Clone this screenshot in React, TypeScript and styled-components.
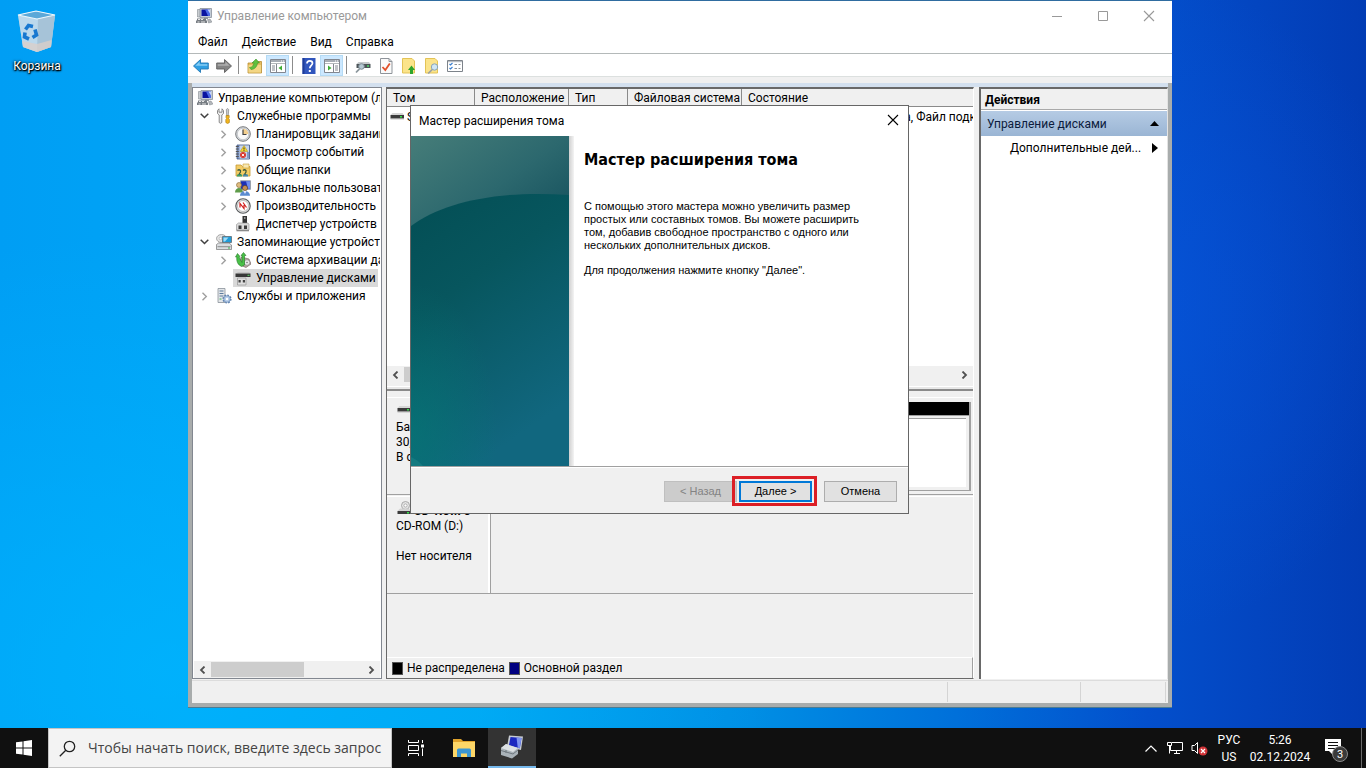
import React from "react";
import styled, { createGlobalStyle, css } from "styled-components";

const UI = `Roboto, "Open Sans", "Noto Sans", sans-serif`;
const CLASSIC = `"Liberation Sans", Arial, sans-serif`;

const Global = createGlobalStyle`
  *, *::before, *::after { box-sizing: border-box; }
  body { margin: 0; font-family: ${UI}; font-size: 12px; line-height: 16px; color: #000; }
  button, input { font: inherit; color: inherit; margin: 0; }
  button { padding: 0; border: 0; background: none; }
  svg { display: block; flex: none; }
  h1, h2, p, ul { margin: 0; padding: 0; }
`;

/* ---------- Desktop ---------- */

const Desktop = styled.div`
  min-height: 100vh;
  display: flex;
  flex-direction: column;
`;

const Workspace = styled.main`
  position: relative;
  flex: 1;
  min-height: 708px;
  overflow: hidden;
  background:
    radial-gradient(ellipse 45% 60% at 12% 92%, rgba(0, 184, 255, 0.65), rgba(0, 184, 255, 0)),
    radial-gradient(ellipse 20% 45% at 84% 42%, rgba(8, 88, 226, 0.5), rgba(8, 88, 226, 0)),
    linear-gradient(90deg, #009ef4 0%, #00a4f6 14%, #00a4f0 35%, #008ee4 55%, #0070da 70%, #034fcc 84%, #0345c0 92%, #023cb4 100%);
`;

const Shortcut = styled.button`
  position: absolute;
  left: 0;
  top: 8px;
  width: 74px;
  display: flex;
  flex-direction: column;
  align-items: center;
  gap: 4px;
  color: #fff;
  text-shadow: 0 1px 2px #000, 0 0 3px #000, 1px 1px 1px #000;
`;

/* ---------- Console window ---------- */

const Window = styled.section`
  position: absolute;
  inset: 0 194px 20px 188px;
  display: flex;
  flex-direction: column;
  border: 1px solid #4b7c94;
  border-top-color: #2f6ca0;
  border-left: 0;
  border-right: 0;
  background: #fff;
`;

const TitleBar = styled.header`
  height: 30px;
  display: flex;
  align-items: center;
  padding-left: 8px;
  color: #999;
`;

const Caption = styled.h1`
  flex: 1;
  padding-left: 5px;
  font-size: 12px;
  font-weight: 400;
`;

const CaptionButton = styled.button`
  width: 46px;
  height: 30px;
  display: grid;
  place-items: center;
`;

const MenuBar = styled.nav`
  height: 23px;
  display: flex;
  align-items: center;
  gap: 14px;
  padding-left: 10px;
  border-bottom: 1px solid #b4b9b9;
`;

const MenuItem = styled.button``;

const ToolBar = styled.div`
  height: 23px;
  display: flex;
  align-items: flex-end;
  padding-left: 1px;
  border-bottom: 1px solid #dce0df;
`;

const ToolButton = styled.button<{ $on?: boolean }>`
  width: 23px;
  height: 21px;
  display: grid;
  place-items: center;
  ${(p) => p.$on && css`background: #cce8ff; border: 1px solid #b5dbf5;`}
`;

const ToolDivider = styled.span`
  width: 1px;
  height: 18px;
  margin: 0 4px 2px 3px;
  background: #8c8c8c;
`;

const Frame = styled.div`
  flex: 1;
  min-height: 0;
  display: flex;
  flex-direction: column;
  border: 4px solid #a8acac;
  border-top: 0;
  background: #f0f0f0;
`;

const FrameHead = styled.div`
  height: 6px;
  margin: 0 -4px;
  background: #f0f0f0;
`;

const Panes = styled.div`
  flex: 1;
  min-height: 0;
  display: grid;
  grid-template-columns: 190px minmax(0, 1fr) 189px;
  column-gap: 4px;
  padding-top: 4px;
  background: linear-gradient(#d3e0ef 4px, #f0f0f0 4px);
`;

const Pane = styled.div`
  min-width: 0;
  min-height: 0;
  display: flex;
  flex-direction: column;
  overflow: hidden;
`;

const TreePane = styled(Pane)`
  border: 1px solid #828790;
  background: #fff;
  padding: 1px 1px 0;
`;

const Tree = styled.ul`
  flex: 1;
  list-style: none;
  overflow: hidden;
  padding-left: 3px;
`;

const TreeRow = styled.li<{ $depth: number }>`
  height: 18px;
  display: flex;
  align-items: center;
  padding-left: ${(p) => Math.max(0, p.$depth - 1) * 19}px;
  white-space: nowrap;
`;

const Twisty = styled.span`
  width: 19px;
  padding-left: 3px;
  flex: none;
`;

const TreeLabel = styled.span<{ $on?: boolean }>`
  height: 18px;
  display: flex;
  align-items: center;
  gap: 5px;
  padding: 0 2px;
  margin-left: -2px;
  background: ${(p) => (p.$on ? "#d9d9d9" : "transparent")};
`;

const ScrollBar = styled.div`
  height: 17px;
  flex: none;
  display: flex;
  background: #f0f0f0;
`;

const ScrollArrow = styled.button`
  width: 17px;
  display: grid;
  place-items: center;
`;

const ScrollTrack = styled.div`
  flex: 1;
`;

const ScrollThumb = styled.div<{ $size: number }>`
  width: ${(p) => p.$size}%;
  height: 15px;
  margin-top: 1px;
  background: #cdcdcd;
`;

const MainPane = styled(Pane)`
  margin-right: 1px;
  border: solid #696969;
  border-width: 2px 0 1px 1px;
  border-right: 1px solid #fff;
`;

const VolumePane = styled.div`
  height: 302px;
  flex: none;
  display: flex;
  flex-direction: column;
  background: #fff;
  border-bottom: 2px solid #8a8a8a;
`;

const VolumeArea = styled.div`
  flex: 1;
  overflow: hidden;
`;

const VolumeTable = styled.table`
  width: 100%;
  table-layout: fixed;
  border-collapse: separate;
  border-spacing: 0;

  th {
    height: 18px;
    padding: 1px 0 0 6px;
    line-height: 16px;
    text-align: left;
    font-weight: 400;
    background: #f0f0f0;
    border-right: 1px solid #8a8a8a;
    border-bottom: 1px solid #8a8a8a;
    white-space: nowrap;
  }
  th:last-child { border-right: 0; }
  td {
    height: 20px;
    padding: 0 3px;
    white-space: nowrap;
    overflow: hidden;
  }
`;

const VolumeName = styled.span`
  display: flex;
  align-items: center;
  gap: 2px;
  margin-left: -1px;
`;

const PaneLip = styled.div`
  height: 6px;
  background: linear-gradient(#f0f0f0 3px, #fff 3px, #fff 4px, #e8e8e8 4px);
`;

const Disks = styled.div`
  flex: 1;
  padding-top: 6px;
  background: #f0f0f0;
`;

const DiskRow = styled.div`
  height: 98px;
  display: flex;
  margin-bottom: 1px;
  border-top: 1px solid #fff;
`;

const DiskInfo = styled.div`
  width: 104px;
  flex: none;
  padding: 4px 8px 0 9px;
  line-height: 15px;
  border-right: 1px solid #a0a0a0;
  border-bottom: 1px solid #a0a0a0;
  box-shadow: inset -2px 0 #fff;
`;

const DiskName = styled.div`
  height: 18px;
  display: flex;
  align-items: flex-start;
  gap: 2px;
  font-weight: 700;
  line-height: 21px;
`;

const DiskBody = styled.div`
  flex: 1;
  padding: 4px 2px 3px 0;
  border-bottom: 1px solid #a0a0a0;
`;

const Volume = styled.div`
  height: 89px;
  border: solid #a0a0a0;
  border-width: 0 2px 1px 0;
  display: flex;
  flex-direction: column;
`;

const VolumeStripe = styled.div`
  height: 14px;
  background: #000;
  border-bottom: 1px solid #a0a0a0;
`;

const VolumeBody = styled.div`
  flex: 1;
  margin: 2px 3px 3px 0;
  background: #fff;
  border-top: 1px solid #a0a0a0;
`;

const Legend = styled.div`
  height: 21px;
  display: flex;
  align-items: center;
  gap: 4px;
  padding-left: 5px;
  border-top: 1px solid #fff;
  border-right: 1px solid #a0a0a0;
  background: #f0f0f0;
`;

const Swatch = styled.span<{ $color: string }>`
  width: 11px;
  height: 13px;
  border: 1px solid #555;
  background: ${(p) => p.$color};
`;

const ActionsPane = styled(Pane)`
  border: solid #696969;
  border-width: 2px 0 0 2px;
  border-right: 1px solid #e3e3e3;
  background: #fff;
`;

const ActionsTitle = styled.h2`
  height: 21px;
  padding: 1px 4px 0;
  font-size: 12px;
  line-height: 20px;
  font-weight: 700;
  background: #f0f0f0;
  border-bottom: 1px solid #a9a9a9;
`;

const ActionGroup = styled.button`
  height: 25px;
  margin-top: 1px;
  padding: 0 8px 0 6px;
  display: flex;
  align-items: center;
  justify-content: space-between;
  color: #0c1c3c;
  background: linear-gradient(#b5cbe4, #9ab5d4);
`;

const ActionLink = styled.button`
  height: 24px;
  padding: 0 9px 0 29px;
  display: flex;
  align-items: center;
  justify-content: space-between;
`;

const StatusBar = styled.footer`
  height: 23px;
  flex: none;
  display: flex;
  justify-content: flex-end;
  margin-top: 1px;
  border-top: 1px solid #dcdcdc;
  padding: 1px 2px 1px 0;
`;

const StatusCell = styled.span<{ $w: number }>`
  width: ${(p) => p.$w}px;
  border-left: 1px solid #d4d4d4;
`;

/* ---------- Wizard ---------- */

const Dialog = styled.section`
  position: absolute;
  left: 410px;
  top: 105px;
  width: 499px;
  border: 1px solid #666;
  background: #fff;
  display: flex;
  flex-direction: column;
`;

const DialogTitle = styled.header`
  height: 30px;
  display: flex;
  align-items: center;
  justify-content: space-between;
  padding-left: 8px;
`;

const DialogClose = styled.button`
  width: 30px;
  height: 28px;
  align-self: flex-start;
  display: grid;
  place-items: center;
`;

const DialogBody = styled.div`
  display: flex;
  height: 330px;
`;

const Banner = styled.div`
  flex: none;
  padding-right: 5px;
  background: linear-gradient(90deg, #d0d0d0 158px, #f4f4f4 163px);
`;

const Copy = styled.div`
  padding: 13px 40px 0 10px;
  font: 11px/13px ${CLASSIC};
`;

const Heading = styled.h2`
  font: 700 16px/22px "DejaVu Sans Condensed", "DejaVu Sans", sans-serif;
  margin-bottom: 29px;
  white-space: nowrap;
`;

const Paragraph = styled.p`
  width: 290px;
  margin-bottom: 12px;
`;

const DialogFooter = styled.footer`
  height: 47px;
  display: flex;
  align-items: flex-start;
  justify-content: flex-end;
  padding: 14px 11px 0;
  background: #f0f0f0;
  border-top: 1px solid #a0a0a0;
  box-shadow: inset 0 1px #fff;
  font: 11px/13px ${CLASSIC};
`;

const PushButton = styled.button<{ $primary?: boolean }>`
  width: 73px;
  height: 21px;
  background: #e1e1e1;
  border: ${(p) => (p.$primary ? "2px solid #0078d7" : "1px solid #adadad")};
  &:disabled { background: #ccc; border-color: #bfbfbf; color: #838383; }
`;

const Highlight = styled.span`
  position: relative;
  display: flex;
  margin: 0 12px 0 2px;
  &::after {
    content: "";
    position: absolute;
    inset: -5px -5px -4px -7px;
    border: 3px solid #dc1f26;
    pointer-events: none;
  }
`;

/* ---------- Task bar ---------- */

const TaskBar = styled.footer`
  height: 40px;
  display: flex;
  background: #101010;
  color: #fff;
`;

const TaskButton = styled.button<{ $active?: boolean }>`
  width: 48px;
  height: 40px;
  display: grid;
  place-items: center;
  ${(p) => p.$active && css`background: #333; border-bottom: 2px solid #76b9ed;`}
`;

const SearchBox = styled.label`
  width: 344px;
  display: flex;
  align-items: center;
  gap: 12px;
  padding-left: 10px;
  color: #222;
  background: #f3f3f3;
  border: 1px solid #c4c4c4;
`;

const SearchInput = styled.input`
  flex: 1;
  min-width: 0;
  padding: 0;
  border: 0;
  background: none;
  font-family: "Open Sans", "Noto Sans", sans-serif;
  font-size: 14px;
  line-height: 20px;
  outline: 0;
  &::placeholder { color: #444; opacity: 1; }
`;

const Spacer = styled.div`
  flex: 1;
`;

const TrayButton = styled.button<{ $w: number }>`
  width: ${(p) => p.$w}px;
  display: grid;
  place-items: center;
`;

const TrayText = styled.button<{ $w: number }>`
  width: ${(p) => p.$w}px;
  padding: 4px 0 2px;
  line-height: 17px;
  text-align: center;
`;

const ShowDesktop = styled.button`
  width: 5px;
  border-left: 1px solid #6a6a6a;
`;

/* ---------- Icons ---------- */

const Svg = ({ children, size = 16 }: { children: React.ReactNode; size?: number }) => (
  <svg width={size} height={size} viewBox="0 0 16 16" aria-hidden="true">{children}</svg>
);

const ComputerIcon = () => (
  <Svg>
    <path d="M1.500 1.500h3v7.500h-3z" fill="#c9cdd1" stroke="#858b90" strokeWidth=".6" />
    <path d="M4 .5h11.500v9H4z" fill="#c3ccd6" stroke="#8a929c" strokeWidth=".8" />
    <path d="M5.500 1.500H14v6.500H5.500z" fill="#0a14a0" />
    <path d="M9 1.500h5V8h-2z" fill="#4a6ae6" /><path d="M11.500 1.500H14v4z" fill="#c4d4fc" />
    <path d="M8 9.500h4v1.500H8z" fill="#8f959b" />
    <path d="M1 10.500h9v2H1zM0 12.500h11V15H0z" fill="#777d83" />
    <path d="M2 11h2v1H2zM5 11h2v1H5zM1.500 13.500h2v1h-2zM5 13.500h4v1H5z" fill="#e6e6e6" />
    <path d="M11.500 11.500l2.500-.5 2 3-3.500 1z" fill="#b4b8bc" stroke="#7c8288" strokeWidth=".5" />
  </Svg>
);

const ToolsIcon = () => (
  <Svg>
    <path d="M3 .8L1.500 2.500v3L3.200 7v7.500q1.300 1.500 2.600 0V7l1.700-1.500v-3L6 .8v3.400H3z" fill="#efefef" stroke="#7a7a7a" strokeWidth=".9" />
    <path d="M10.300 1.500l1.200-1 1.200 1-.4 6h-1.600z" fill="#c9cdd1" stroke="#777" strokeWidth=".6" />
    <path d="M10 7.500h3.200v2l-.6 1 .8 1v3q-1.800 2-3.600 0v-3l.8-1-.6-1z" fill="#f2b51d" stroke="#a87a12" strokeWidth=".6" />
  </Svg>
);

const ClockIcon = () => (
  <Svg>
    <circle cx="8" cy="8" r="7.300" fill="#d5d9dd" stroke="#77797c" />
    <circle cx="8" cy="8" r="5.700" fill="#fafafa" stroke="#b0b4b8" strokeWidth=".6" />
    <path d="M8 2.700A5.300 5.300 0 0 1 13.300 8H8z" fill="#f3cf8e" />
    <path d="M8 3.500v5h3.500" fill="none" stroke="#444" strokeWidth="1.200" />
  </Svg>
);

const EventIcon = () => (
  <Svg>
    <path d="M2 1h12.500v14H2z" fill="#7f98c8" stroke="#3f5684" strokeWidth=".8" />
    <path d="M4.500 1.500H14v13H4.500z" fill="#c7d5ec" />
    <path d="M.800 2.500h3M.800 5h3M.800 7.500h3M.800 10h3M.800 12.500h3" stroke="#555" />
    <path d="M9 1.500l3.800 6H5.200z" fill="#f7d62c" stroke="#a98a14" strokeWidth=".5" />
    <path d="M9 3.500v2M9 6.200v.8" stroke="#333" />
    <circle cx="8" cy="11" r="3" fill="#d9362c" /><path d="M6.800 9.800l2.400 2.400M9.200 9.800l-2.400 2.400" stroke="#fff" strokeWidth=".9" />
    <path d="M12 9h2M12 11h2M12 13h2" stroke="#3c5ca0" />
  </Svg>
);

const SharedIcon = () => (
  <Svg>
    <path d="M1 3h5l1.500 1.500H15V14H1z" fill="#f2cc66" stroke="#c79a33" strokeWidth=".8" />
    <path d="M8 2h6v4H8z" fill="#f9e8b0" stroke="#c79a33" strokeWidth=".6" />
    <path d="M2.500 8.500q1.500-1.500 3 0v1.500L4 12.500H6M8 8.500q1.500-1.500 3 0v1.500l-1.500 2.500h2" fill="none" stroke="#3d5a3c" strokeWidth="1.200" />
    <path d="M2 12.500h5v2H2z" fill="#3ea06a" /><path d="M8 12.500h5v2H8z" fill="#4b8ab0" />
  </Svg>
);

const UsersIcon = () => (
  <Svg>
    <path d="M5.500 .8h10v8.500h-10z" fill="#1c2eb6" stroke="#9aa2ac" />
    <path d="M11 1.300h4v7.500h-2z" fill="#6e8df0" />
    <circle cx="4" cy="5" r="2.500" fill="#e0bc80" stroke="#83602c" strokeWidth=".6" /><path d="M0 12.500c0-6 8-6 8 0z" fill="#5f9c4a" />
    <circle cx="10" cy="8" r="2.600" fill="#c58f54" stroke="#5e3f1c" strokeWidth=".6" /><path d="M5 15.800c0-6.500 10-6.500 10 0z" fill="#5b8bd0" />
    <path d="M8.500 11h3L10 14z" fill="#eef" />
  </Svg>
);

const PerformanceIcon = () => (
  <Svg>
    <circle cx="8" cy="8" r="7.200" fill="#e4e4e4" stroke="#55585a" strokeWidth="1.100" />
    <circle cx="8" cy="8" r="5.500" fill="#fff" stroke="#999" strokeWidth=".6" />
    <path d="M5 9.500V5.500l4 5V7M8 4.500l3.500 5" fill="none" stroke="#d01c1c" strokeWidth="1.200" />
  </Svg>
);

const DeviceIcon = () => (
  <Svg>
    <path d="M7.500 0h4.500v7H7.500z" fill="#333" /><path d="M9 1.300h1.500v1.400H9z" fill="#bbb" />
    <path d="M1.500 8.500L3.500 7h9.500l1 1.500V14H1.500z" fill="#dcdcdc" stroke="#8b8b8b" strokeWidth=".6" />
    <path d="M3.500 9.500h3v3.500h-3zM9 9.500h3v3.500H9z" fill="#3c3c3c" /><path d="M1.500 14H14v1.300H1.500z" fill="#8a8a8a" />
  </Svg>
);

const StorageIcon = () => (
  <Svg>
    <ellipse cx="5.500" cy="4.500" rx="5" ry="4" fill="#e2e2e2" stroke="#8d8d8d" strokeWidth=".7" />
    <circle cx="4.500" cy="4.500" r="1.300" fill="#fff" stroke="#999" strokeWidth=".5" />
    <path d="M6.500 2.500h9v6h-9z" fill="#1f9bd8" stroke="#5f6b74" strokeWidth=".8" />
    <path d="M7.500 3.500h5l-3.500 4H7.500z" fill="#9fdcf6" />
    <path d="M.500 10.500L2.500 9h10.500l2.500 2v4.500H.500z" fill="#dadde0" stroke="#777" strokeWidth=".7" />
    <path d="M1.500 12.700h13" stroke="#777" strokeWidth=".8" /><path d="M12 13.500h2v1h-2z" fill="#35b24a" />
  </Svg>
);

const BackupIcon = () => (
  <Svg>
    <path d="M6 5l8 2 2 5-5 3.500L5 13z" fill="#b9a9a5" stroke="#6b5a56" strokeWidth=".6" />
    <circle cx="12" cy="10.500" r="2.800" fill="#e8e8e8" stroke="#888" strokeWidth=".6" /><circle cx="12" cy="10.500" r=".8" fill="#777" />
    <path d="M.500 5L2.500 1.500 5 4.500 4 5l3 5.500V3.500H6L8.500 .5 11 3.500H9.500v9.500L6.500 14.500Q1 12 1.800 5z" fill="#49c048" stroke="#287a2a" strokeWidth=".6" />
  </Svg>
);

const DiskMgmtIcon = () => (
  <Svg>
    <path d="M1 3.500L3 2h11l1.500 1.500z" fill="#c6c6c6" /><path d="M.500 3.500h15V7H.500z" fill="#383838" />
    <path d="M12.500 4.800h2v1h-2z" fill="#5ee06a" />
    <path d="M2.500 8h8.500v7H2.500z" fill="#e0e0e0" stroke="#8a8a8a" strokeWidth=".6" />
    <path d="M3.500 10h2.200v2.500H3.500zM7.800 10H10v2.500H7.800z" fill="#444" />
  </Svg>
);

const ServicesIcon = () => (
  <Svg>
    <path d="M2 .5h7v14H2z" fill="#e3e6e9" stroke="#8a929a" strokeWidth=".8" />
    <path d="M3.500 3h4M3.500 5.500h4M3.500 8h4" stroke="#5b7a9c" /><path d="M3.500 11h2" stroke="#3fae58" />
    <circle cx="11" cy="11" r="3.600" fill="#9bb9dd" stroke="#5f82ae" strokeWidth="2" strokeDasharray="1.600 1.200" />
    <circle cx="11" cy="11" r="3.200" fill="#b3cbe8" stroke="#6585ad" strokeWidth=".5" /><circle cx="11" cy="11" r="1.200" fill="#fff" />
  </Svg>
);

const DriveIcon = () => (
  <Svg>
    <path d="M1.500 6L3.500 4h10l1.500 2z" fill="#d6d6d6" /><path d="M1.500 6H15v3.500H1.500z" fill="#3b3b3b" />
    <path d="M1.500 9.500H15v.8H1.500z" fill="#999" /><path d="M11 7h2v1.400h-2z" fill="#35e04a" />
  </Svg>
);

const DiscIcon = () => (
  <Svg>
    <circle cx="9.500" cy="4.500" r="4" fill="#e5e5e5" stroke="#999" strokeWidth=".8" />
    <circle cx="9.500" cy="4.500" r="1.600" fill="#fff" stroke="#999" strokeWidth=".7" />
    <path d="M1.500 10L4 7.500h9l2 2.500z" fill="#d2d2d2" /><path d="M1.500 10H15v3H1.500z" fill="#3b3b3b" />
    <path d="M11 11h2v1.400h-2z" fill="#35e04a" />
  </Svg>
);

const ArrowIcon = ({ back }: { back?: boolean }) => (
  <Svg>
    <g transform={back ? undefined : "matrix(-1 0 0 1 16 0)"}>
      <path d="M.5 8l7-6.500v3.500h7.800v6H7.500v3.500z" fill={back ? "#2f9fe3" : "#858585"} stroke={back ? "#2478b4" : "#5e5e5e"} strokeWidth=".9" />
      <path d="M2.300 7.700l4.300-4v2.500h7.700v1.500z" fill={back ? "#86cdf5" : "#aeaeae"} />
    </g>
  </Svg>
);

const FolderUpIcon = () => (
  <Svg>
    <path d="M1 5h5l1-1.500h7.500v11.500H1z" fill="#e6bd60" stroke="#b98f34" strokeWidth=".8" />
    <path d="M1.500 7h12.500v7.500H1.500z" fill="#f3d684" />
    <path d="M2.500 9.500c2.500 0 4-2 4.500-4.500H5L9 1l3.500 4h-2c-.5 4-3 6.500-6.500 6.500z" fill="#5fc03e" stroke="#2c8a1f" strokeWidth=".5" />
  </Svg>
);

const PanelIcon = ({ right }: { right?: boolean }) => (
  <Svg>
    <path d="M.500 1.500h15v13H.500z" fill="#fff" stroke="#828790" />
    <path d="M1 2h14v2H1z" fill="#a7adb5" /><path d="M11 2.500h1v1h-1zM13 2.500h1v1h-1z" fill="#fff" />
    <path d="M1 5.500h14" stroke="#b4b8bc" />
    <path d={right ? "M9.500 6v8M11 8h3M11 10h3M11 12h3" : "M6.500 6v8M2 8h3M2 10h3M2 12h3"} stroke="#828790" />
    <path d={right ? "M4 7.500v5L7.500 10z" : "M12 7.500v5L8.500 10z"} fill="#3fae35" />
  </Svg>
);

const HelpIcon = () => (
  <Svg>
    <path d="M1.500 0h13v16h-13z" fill="#3156bd" /><path d="M1.500 0h2v16h-2z" fill="#1f3c98" />
    <path d="M6 5.500c0-3.700 5.500-3.400 5.500-.3 0 2-2.700 2.300-2.700 5" fill="none" stroke="#fff" strokeWidth="1.700" />
    <path d="M7.800 12h2v2h-2z" fill="#fff" />
  </Svg>
);

const DiskSearchIcon = () => (
  <Svg>
    <path d="M1.500 6L3.500 4h10.500l1.500 2z" fill="#c6cacc" /><path d="M1.500 6h14v4h-14z" fill="#4d5458" />
    <path d="M12 7.200h2v1.500h-2z" fill="#4fd96a" />
    <circle cx="6.500" cy="8.500" r="2.800" fill="#b5c8d2" stroke="#7b8a93" /><path d="M4.500 10.800L1 14.500" stroke="#8b969c" strokeWidth="1.800" />
  </Svg>
);

const DocCheckIcon = () => (
  <Svg>
    <path d="M2.500.500h8.500l3 3v12H2.500z" fill="#fafafa" stroke="#8f949a" /><path d="M11 .500v3h3" fill="none" stroke="#8f949a" />
    <path d="M4.500 9l2.800 3 4.500-6.500" fill="none" stroke="#e2512b" strokeWidth="1.800" />
  </Svg>
);

const DocUpIcon = () => (
  <Svg>
    <path d="M1.500.500h9.500l2.500 2.500v12H1.500z" fill="#fbe48a" stroke="#e3c356" />
    <path d="M9 16v-4H7l3.500-4.500L14 12h-2v4z" fill="#2fa52c" />
  </Svg>
);

const DocSearchIcon = () => (
  <Svg>
    <path d="M1.500.500h9.500l2.500 2.500v12H1.500z" fill="#fbe48a" stroke="#e3c356" />
    <circle cx="10.500" cy="9" r="3.200" fill="#cfe6f4" stroke="#8aa4b4" /><path d="M8.200 11.500l-4 4" stroke="#9aa0a4" strokeWidth="1.600" />
  </Svg>
);

const ListIcon = () => (
  <Svg>
    <path d="M.500 2.500h15v11H.500z" fill="#fff" stroke="#7d838a" /><path d="M1 3h14v1.200H1z" fill="#b9bec4" />
    <path d="M2.500 6l1 1 2-2M2.500 10l1 1 2-2" fill="none" stroke="#3a7fd0" strokeWidth="1.200" />
    <path d="M7.500 6.500H10M7.500 10.500H10M11.500 6.500h2M11.500 10.500h2" stroke="#8a9096" />
  </Svg>
);

const Chevron = ({ dir }: { dir: "left" | "right" }) => (
  <svg width="7" height="8" viewBox="0 0 7 8" aria-hidden="true">
    <path d={dir === "left" ? "M5.500 .500L2 4l3.500 3.500" : "M1.500 .500L5 4 1.500 7.500"} fill="none" stroke="#505050" strokeWidth="1.800" />
  </svg>
);

const TreeArrow = ({ open }: { open: boolean }) =>
  open ? (
    <svg width="9" height="6" viewBox="0 0 9 6" aria-hidden="true"><path d="M.700 .700l3.800 3.800L8.300 .700" fill="none" stroke="#404040" strokeWidth="1.500" /></svg>
  ) : (
    <svg width="9" height="9" viewBox="0 0 9 9" aria-hidden="true"><path d="M2.500 .700l3.800 3.800-3.800 3.800" fill="none" stroke="#a0a0a0" strokeWidth="1.400" /></svg>
  );

const CloseIcon = ({ color }: { color: string }) => (
  <svg width="12" height="12" viewBox="0 0 12 12" aria-hidden="true"><path d="M1 1l10 10M11 1L1 11" stroke={color} strokeWidth="1.100" /></svg>
);

const RecycleBin = () => (
  <svg width="44" height="46" viewBox="0 0 44 46" aria-hidden="true">
    <path d="M3 7l18-4 19 4-4 32-14 5-14-5z" fill="#8fc4e6" />
    <path d="M3 7l18 4 19-4-4 32-14 5-14-5z" fill="#c3dcec" fillOpacity=".85" />
    <path d="M23 11l17-4-4 32-14 5z" fill="#9dbad0" fillOpacity=".7" />
    <path d="M7 33l15 3 14.500-4L36 39l-14 5-14-5z" fill="#dccfc8" fillOpacity=".75" />
    <path d="M3 7l18-4 19 4-18 4z" fill="#5ba8d8" stroke="#eef8fd" strokeWidth="1.200" />
    <g fill="none" stroke="#1878d0" strokeWidth="3.600">
      <path d="M10.500 21.500l3-4 4.500 1" /><path d="M20 21.500l1.500 5.500-4 2.500" /><path d="M14 31l-4.500-2 .5-4.500" />
    </g>
  </svg>
);

const WizardBanner = () => (
  <svg width="158" height="330" viewBox="0 0 158 330" aria-hidden="true">
    <defs>
      <linearGradient id="sky" x1="0" y1="0" x2="1" y2="1">
        <stop offset="0" stopColor="#467d79" /><stop offset=".5" stopColor="#2c686e" /><stop offset="1" stopColor="#0e4a58" />
      </linearGradient>
      <linearGradient id="deep" x1="0" y1="0" x2=".4" y2="1">
        <stop offset="0" stopColor="#034e54" /><stop offset=".4" stopColor="#07565e" /><stop offset="1" stopColor="#11677f" />
      </linearGradient>
      <radialGradient id="glow" cx="0" cy=".88" r=".55">
        <stop offset="0" stopColor="#047a76" stopOpacity=".6" /><stop offset="1" stopColor="#047a76" stopOpacity="0" />
      </radialGradient>
    </defs>
    <path d="M0 0h158v110H0z" fill="url(#sky)" />
    <path d="M0 90C32 66 88 54 158 59v271H0z" fill="url(#deep)" />
    <path d="M0 90C32 66 88 54 158 59v271H0z" fill="url(#glow)" />
    <path d="M0 321q7 3 12 9H0z" fill="#147a80" />
  </svg>
);

const tree = [
  { depth: 0, label: "Управление компьютером (локальным)", icon: <ComputerIcon /> },
  { depth: 1, label: "Служебные программы", icon: <ToolsIcon />, open: true },
  { depth: 2, label: "Планировщик заданий", icon: <ClockIcon />, open: false },
  { depth: 2, label: "Просмотр событий", icon: <EventIcon />, open: false },
  { depth: 2, label: "Общие папки", icon: <SharedIcon />, open: false },
  { depth: 2, label: "Локальные пользователи", icon: <UsersIcon />, open: false },
  { depth: 2, label: "Производительность", icon: <PerformanceIcon />, open: false },
  { depth: 2, label: "Диспетчер устройств", icon: <DeviceIcon /> },
  { depth: 1, label: "Запоминающие устройства", icon: <StorageIcon />, open: true },
  { depth: 2, label: "Система архивации данных", icon: <BackupIcon />, open: false },
  { depth: 2, label: "Управление дисками", icon: <DiskMgmtIcon />, selected: true },
  { depth: 1, label: "Службы и приложения", icon: <ServicesIcon />, open: false },
];

const HScroll = ({ size }: { size: number }) => (
  <ScrollBar>
    <ScrollArrow aria-label="Влево"><Chevron dir="left" /></ScrollArrow>
    <ScrollTrack><ScrollThumb $size={size} /></ScrollTrack>
    <ScrollArrow aria-label="Вправо"><Chevron dir="right" /></ScrollArrow>
  </ScrollBar>
);

export default function App() {
  return (
    <Desktop>
      <Global />
      <Workspace>
        <Shortcut><RecycleBin />Корзина</Shortcut>

        <Window>
          <TitleBar>
            <ComputerIcon />
            <Caption>Управление компьютером</Caption>
            <CaptionButton aria-label="Свернуть"><svg width="10" height="10" viewBox="0 0 10 10"><path d="M0 5.500h10" stroke="#999" /></svg></CaptionButton>
            <CaptionButton aria-label="Развернуть"><svg width="10" height="10" viewBox="0 0 10 10"><path d="M.500 .500h9v9h-9z" fill="none" stroke="#999" /></svg></CaptionButton>
            <CaptionButton aria-label="Закрыть"><CloseIcon color="#999" /></CaptionButton>
          </TitleBar>
          <MenuBar>
            <MenuItem>Файл</MenuItem><MenuItem>Действие</MenuItem><MenuItem>Вид</MenuItem><MenuItem>Справка</MenuItem>
          </MenuBar>
          <ToolBar>
            <ToolButton aria-label="Назад"><ArrowIcon back /></ToolButton>
            <ToolButton aria-label="Вперёд"><ArrowIcon /></ToolButton>
            <ToolDivider />
            <ToolButton aria-label="Вверх"><FolderUpIcon /></ToolButton>
            <ToolButton aria-label="Дерево консоли" $on><PanelIcon /></ToolButton>
            <ToolDivider />
            <ToolButton aria-label="Справка"><HelpIcon /></ToolButton>
            <ToolButton aria-label="Панель действий" $on><PanelIcon right /></ToolButton>
            <ToolDivider />
            <ToolButton aria-label="Диск"><DiskSearchIcon /></ToolButton>
            <ToolButton aria-label="Проверить"><DocCheckIcon /></ToolButton>
            <ToolButton aria-label="Открыть"><DocUpIcon /></ToolButton>
            <ToolButton aria-label="Найти"><DocSearchIcon /></ToolButton>
            <ToolButton aria-label="Свойства"><ListIcon /></ToolButton>
          </ToolBar>
          <Frame>
            <FrameHead />
            <Panes>
              <TreePane>
                <Tree>
                  {tree.map((n) => (
                    <TreeRow key={n.label} $depth={n.depth}>
                      {n.depth > 0 && <Twisty>{n.open !== undefined && <TreeArrow open={n.open} />}</Twisty>}
                      <TreeLabel $on={n.selected}>{n.icon}{n.label}</TreeLabel>
                    </TreeRow>
                  ))}
                </Tree>
                <HScroll size={61} />
              </TreePane>

              <MainPane>
                <VolumePane>
                  <VolumeArea>
                    <VolumeTable>
                      <colgroup>
                        <col width="88" /><col width="94" /><col width="59" /><col width="114" /><col />
                      </colgroup>
                      <thead>
                        <tr><th>Том</th><th>Расположение</th><th>Тип</th><th>Файловая система</th><th>Состояние</th></tr>
                      </thead>
                      <tbody>
                        <tr>
                          <td><VolumeName><DriveIcon />System</VolumeName></td>
                          <td /><td /><td />
                          <td>Исправен (Система, Загрузка, Файл подкачки)</td>
                        </tr>
                      </tbody>
                    </VolumeTable>
                  </VolumeArea>
                  <HScroll size={80} />
                  <PaneLip />
                </VolumePane>
                <Disks>
                  <DiskRow>
                    <DiskInfo>
                      <DiskName><DriveIcon /></DiskName>
                      <p>Базовый</p><p>30,00 ГБ</p><p>В сети</p>
                    </DiskInfo>
                    <DiskBody>
                      <Volume><VolumeStripe /><VolumeBody /></Volume>
                    </DiskBody>
                  </DiskRow>
                  <DiskRow>
                    <DiskInfo>
                      <DiskName><DiscIcon />CD-ROM 0</DiskName>
                      <p>CD-ROM (D:)</p><br /><p>Нет носителя</p>
                    </DiskInfo>
                    <DiskBody />
                  </DiskRow>
                </Disks>
                <Legend>
                  <Swatch $color="#000" />Не распределена
                  <Swatch $color="#000080" />Основной раздел
                </Legend>
              </MainPane>

              <ActionsPane>
                <ActionsTitle>Действия</ActionsTitle>
                <ActionGroup>
                  Управление дисками
                  <svg width="9" height="5" viewBox="0 0 9 5"><path d="M0 5L4.500 0 9 5z" /></svg>
                </ActionGroup>
                <ActionLink>
                  Дополнительные дей...
                  <svg width="6" height="10" viewBox="0 0 6 10"><path d="M0 0l6 5-6 5z" /></svg>
                </ActionLink>
              </ActionsPane>
            </Panes>
            <StatusBar>
              <StatusCell $w={133} /><StatusCell $w={85} /><StatusCell $w={1} />
            </StatusBar>
          </Frame>
        </Window>

        <Dialog role="dialog" aria-labelledby="wizard-title">
          <DialogTitle>
            <span id="wizard-title">Мастер расширения тома</span>
            <DialogClose aria-label="Закрыть"><CloseIcon color="#000" /></DialogClose>
          </DialogTitle>
          <DialogBody>
            <Banner><WizardBanner /></Banner>
            <Copy>
              <Heading>Мастер расширения тома</Heading>
              <Paragraph>С помощью этого мастера можно увеличить размер простых или составных томов. Вы можете расширить том, добавив свободное пространство с одного или нескольких дополнительных дисков.</Paragraph>
              <Paragraph>Для продолжения нажмите кнопку "Далее".</Paragraph>
            </Copy>
          </DialogBody>
          <DialogFooter>
            <PushButton disabled>&lt; Назад</PushButton>
            <Highlight><PushButton $primary>Далее &gt;</PushButton></Highlight>
            <PushButton>Отмена</PushButton>
          </DialogFooter>
        </Dialog>
      </Workspace>

      <TaskBar>
        <TaskButton aria-label="Пуск">
          <svg width="16" height="16" viewBox="0 0 16 16"><path d="M0 2.300L6.500 1.400v6.100H0zM7.500 1.200L16 0v7.500H7.500zM0 8.500h6.500v6.100L0 13.700zM7.500 8.500H16V16l-8.500-1.200z" fill="#fff" /></svg>
        </TaskButton>
        <SearchBox>
          <svg width="17" height="17" viewBox="0 0 17 17"><circle cx="10.500" cy="6.500" r="5.200" fill="none" stroke="#222" strokeWidth="1.300" /><path d="M6.800 10.200L.800 16.200" stroke="#222" strokeWidth="1.300" /></svg>
          <SearchInput aria-label="Поиск" placeholder="Чтобы начать поиск, введите здесь запрос" />
        </SearchBox>
        <TaskButton aria-label="Представление задач">
          <svg width="16" height="16" viewBox="0 0 16 16" fill="none" stroke="#fff"><path d="M.500 0v2.500h10V0M.500 16v-2.500h10V16M.500 5.500h10v5H.500zM14.500 0v3M14.500 8.500V16" /><path d="M13 4.500h3v3h-3z" fill="#fff" stroke="none" /></svg>
        </TaskButton>
        <TaskButton aria-label="Проводник">
          <svg width="22" height="18" viewBox="0 0 22 18"><path d="M0 0h8l2 2h12v4H0z" fill="#e0a32c" /><path d="M0 3h22v15H0z" fill="#fcd667" /><path d="M4 18v-7q0-1.500 1.500-1.500h11Q18 9.500 18 11v7h-4v-3.500H8V18z" fill="#3b96d2" /></svg>
        </TaskButton>
        <TaskButton aria-label="Управление компьютером" $active>
          <svg width="24" height="24" viewBox="0 0 24 24">
            <path d="M9 .5l14 1-2 13.500-14-3z" fill="#c7ccd2" /><path d="M10.500 2l11 .9-1.700 10.300L8.800 11z" fill="#1b28c0" /><path d="M16.500 2.500l5 .4-1.700 10.300-2-.4z" fill="#7d93ef" />
            <path d="M1 13l5-4 12 4v6l-6 4.500L1 20z" fill="#a9b2b8" /><path d="M1 13l5-4 12 4-5 4z" fill="#dde2e5" /><path d="M1 15.500l12 3.500 5-4M6 15v3" stroke="#6f787f" fill="none" />
          </svg>
        </TaskButton>
        <Spacer />
        <TrayButton $w={24} aria-label="Скрытые значки"><svg width="12" height="7" viewBox="0 0 12 7"><path d="M.500 6.500l5.500-5.500 5.500 5.500" fill="none" stroke="#fff" strokeWidth="1.200" /></svg></TrayButton>
        <TrayButton $w={24} aria-label="Сеть"><svg width="16" height="14" viewBox="0 0 16 14" fill="none" stroke="#fff"><path d="M5 1.500h10.500v8H3.500V5M7 12.500h6M9.500 9.500v3" /><path d="M.500 1.500h4v3h-4zM2.500 4.500v8" /></svg></TrayButton>
        <TrayButton $w={24} aria-label="Звук"><svg width="17" height="15" viewBox="0 0 17 15"><path d="M1 4.500h2.500L6.500 1.500v11l-3-3H1z" fill="none" stroke="#fff" /><circle cx="12" cy="10" r="4.500" fill="#d13438" /><path d="M10 8l4 4M14 8l-4 4" stroke="#fff" strokeWidth="1.200" /></svg></TrayButton>
        <TrayText $w={36}>РУС<br />US</TrayText>
        <TrayText $w={66}>5:26<br />02.12.2024</TrayText>
        <TrayButton $w={48} aria-label="Уведомления: 3">
          <svg width="28" height="28" viewBox="0 0 28 28">
            <path d="M2 5h16v12h-8v4l-4-4H2z" fill="#fff" /><path d="M5 8.500h10M5 11.500h10M5 14.500h7" stroke="#101010" />
            <circle cx="17" cy="20" r="7.500" fill="#3a3a3a" stroke="#8a8a8a" />
            <text x="17" y="24" textAnchor="middle" fontSize="11" fill="#fff">3</text>
          </svg>
        </TrayButton>
        <ShowDesktop aria-label="Показать рабочий стол" />
      </TaskBar>
    </Desktop>
  );
}
